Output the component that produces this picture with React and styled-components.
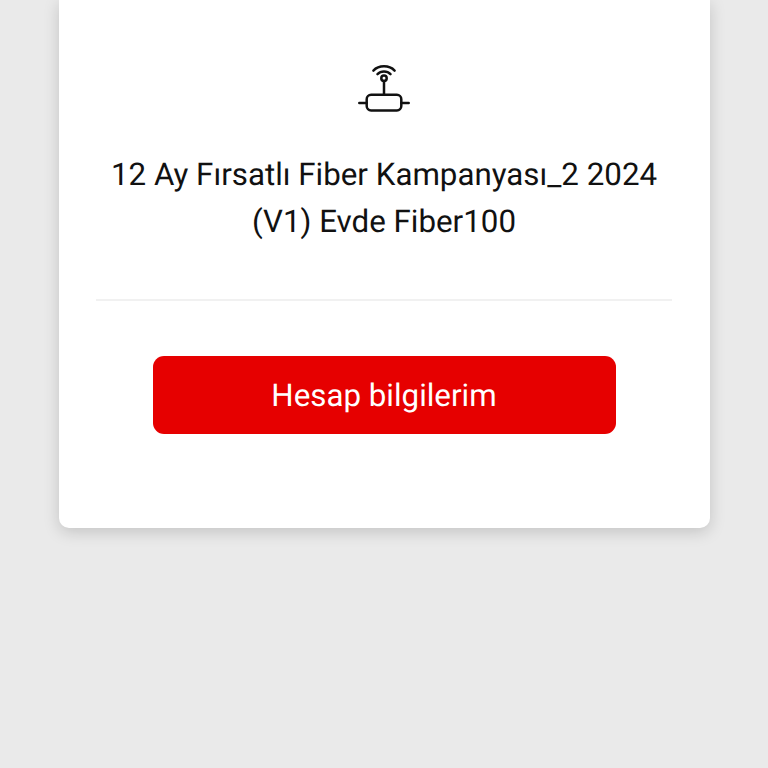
import styled, { createGlobalStyle } from "styled-components";

const plan = {
  name: "12 Ay Fırsatlı Fiber Kampanyası_2 2024 (V1) Evde Fiber100",
  action: "Hesap bilgilerim",
};

const RouterIcon = () => {
  return (
    <svg
      width="52"
      height="48"
      viewBox="0 0 52 48"
      fill="none"
      stroke="#111"
      strokeWidth="2.5"
      strokeLinecap="round"
      aria-hidden="true"
    >
      <path d="M15.4 6.6C20.8 0.9 31.2 0.9 36.6 6.6" />
      <path d="M19.5 10.1C22.9 6.6 29.1 6.6 32.5 10.1" />
      <circle cx="26" cy="14.3" r="2.7" />
      <path d="M26 17V30.4M1.3 39H8.7M43.3 39H50.7" />
      <rect x="8.7" y="30.8" width="34.6" height="15.6" rx="4.4" />
    </svg>
  );
};

const App = () => {
  return (
    <>
      <GlobalStyle />
      <Page>
        <Card>
          <PlanInfo>
            <RouterIcon />
            <PlanName>{plan.name}</PlanName>
          </PlanInfo>
          <Button type="button">{plan.action}</Button>
        </Card>
      </Page>
    </>
  );
};

const GlobalStyle = createGlobalStyle`
  * {
    margin: 0;
    padding: 0;
    box-sizing: border-box;
  }
  body {
    background-color: #eaeaea;
    font-family: Roboto, "Liberation Sans", sans-serif;
    text-rendering: geometricPrecision;
  }
`;

const Page = styled.main`
  height: 768px;
  padding: 0 58px 0 59px;
  overflow: hidden;
`;

const Card = styled.section`
  height: 528px;
  padding: 64px 38px 0 37px;
  display: flex;
  flex-direction: column;
  align-items: center;
  background-color: #fff;
  border-radius: 0 0 10px 10px;
  box-shadow: 0 4px 16px rgba(0, 0, 0, 0.17);
`;

const PlanInfo = styled.div`
  width: 100%;
  height: 237px;
  display: flex;
  flex-direction: column;
  align-items: center;
  gap: 39px;
  border-bottom: 2px solid #f1f1f1;
`;

const PlanName = styled.h2`
  width: 560px;
  color: #111;
  font-size: 31.3px;
  font-weight: 400;
  line-height: 47px;
  text-align: center;
`;

const Button = styled.button`
  width: 463px;
  height: 78px;
  margin-top: 55px;
  border: none;
  border-radius: 11px;
  background-color: #e60000;
  color: #fff;
  font-family: inherit;
  font-size: 31.3px;
  text-rendering: inherit;
  cursor: pointer;
`;

export default App;
